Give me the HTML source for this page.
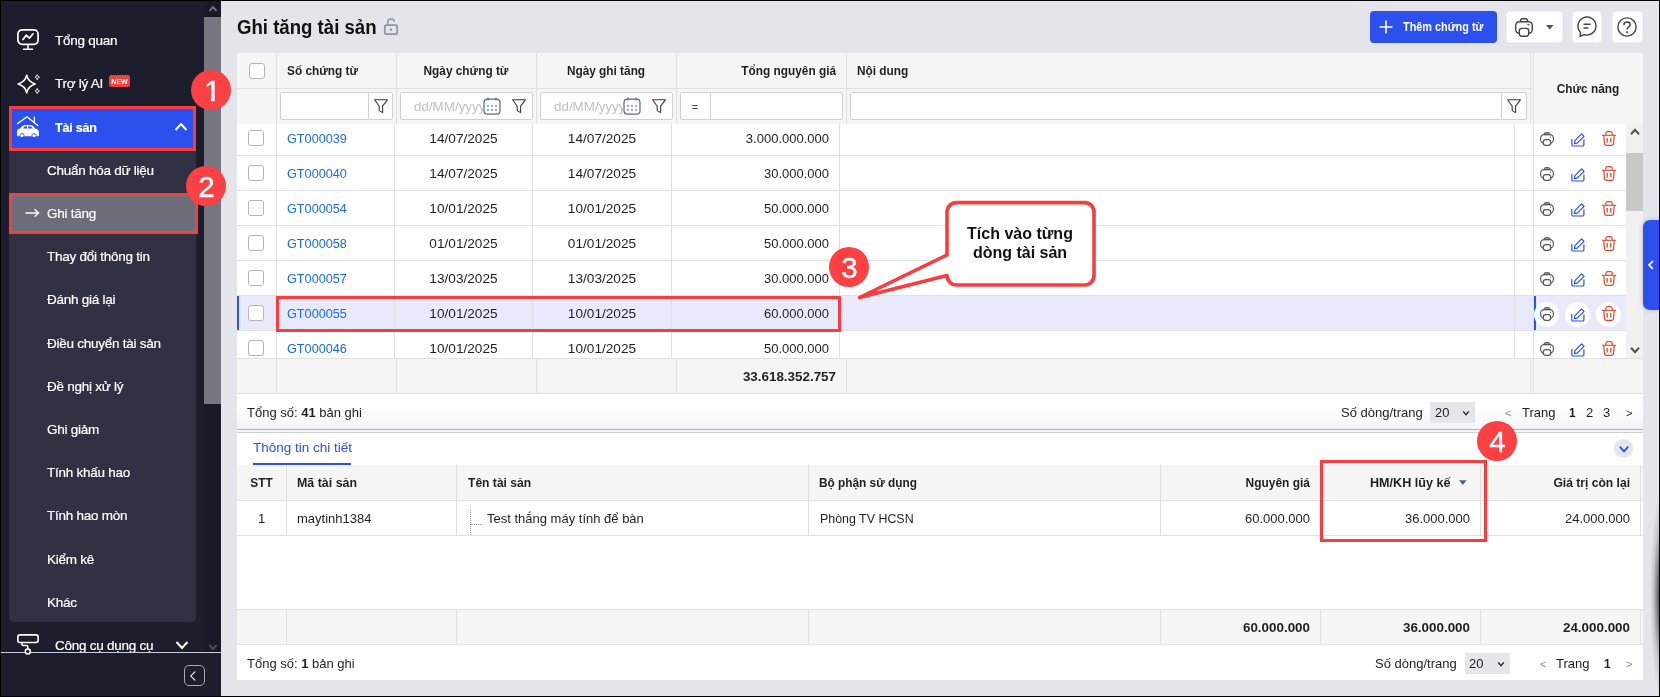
<!DOCTYPE html>
<html><head><meta charset="utf-8"><title>Ghi tăng tài sản</title>
<style>
*{box-sizing:border-box;margin:0;padding:0}
html,body{width:1660px;height:697px;overflow:hidden;background:#e4e5eb;font-family:"Liberation Sans",sans-serif;font-size:13px;color:#1f1f1f}
div,span{position:absolute}
span.i{position:static}
.t{white-space:nowrap;height:20px;line-height:20px}
.b{font-weight:bold}
.c{text-align:center}
.r{text-align:right}
#root{left:0;top:0;width:1660px;height:697px;will-change:transform}
#frame{left:0;top:0;width:1660px;height:697px;border:1px solid #000;z-index:100}
#side{left:0;top:0;width:221px;height:697px;background:#1c1d2d;color:#fff}
#sscroll{left:204px;top:0;width:17px;height:652px;background:#191a27}
#sscroll .thumb{left:0;top:17px;width:17px;height:387px;background:#75767f}
.mi{font-size:13.5px;letter-spacing:-0.25px;-webkit-text-stroke:0.2px #fff;color:#fff;white-space:nowrap;height:20px;line-height:20px}
#subpanel{left:9px;top:150px;width:187px;height:472px;background:#303244;border-radius:0 0 5px 5px}
.bg{background:#f5f5f5}
.w{background:#fff}
.vl{width:1px;background:#e0e0e0}
.hl{height:1px;background:#e0e0e0}
.inp{height:28px;top:92px;background:#fff;border:1px solid #d0d0d0;border-radius:2px}
.cb{width:16px;height:16px;border:1px solid #b5b5b5;border-radius:3px;background:#fff}
.lnk{color:#1a6de6}
.red{border:3px solid #fa3c3f}
.circ{width:40px;height:40px;border-radius:50%;background:#fb4143;color:#fff;font-size:30px;text-align:center;line-height:41.5px;-webkit-text-stroke:0.4px #fff}
.circ span{position:relative;display:inline-block;transform:scaleX(0.98)}
.circ span.one{left:1.2px;height:1.117em;line-height:1.117em;vertical-align:baseline;clip-path:polygon(0 0,100% 0,100% 72%,64% 72%,64% 100%,41.5% 100%,41.5% 72%,0 72%)}
.btn{background:#fff;border-radius:4px;top:11px;height:32px}
.ph{color:#c0c0c0}
svg{position:absolute;overflow:visible}
</style></head><body><div id="root">
<div id="side">
<div id="subpanel"></div>
<div class="" style="left:9px;top:106px;width:187px;height:44px;background:#2b50ed"></div>
<div class="" style="left:9px;top:193px;width:189px;height:41px;background:#6b6d78"></div>
<div class="mi" style="left:55px;top:31px;">Tổng quan</div>
<div class="mi" style="left:55px;top:74px;">Trợ lý AI</div>
<div class="mi" style="left:55px;top:118px;font-weight:bold;transform:scaleX(0.93);transform-origin:left center">Tài sản</div>
<div class="mi" style="left:47px;top:161px;">Chuẩn hóa dữ liệu</div>
<div class="mi" style="left:47px;top:204px;">Ghi tăng</div>
<div class="mi" style="left:47px;top:247px;">Thay đổi thông tin</div>
<div class="mi" style="left:47px;top:290px;">Đánh giá lại</div>
<div class="mi" style="left:47px;top:334px;">Điều chuyển tài sản</div>
<div class="mi" style="left:47px;top:377px;">Đề nghị xử lý</div>
<div class="mi" style="left:47px;top:420px;">Ghi giảm</div>
<div class="mi" style="left:47px;top:463px;">Tính khấu hao</div>
<div class="mi" style="left:47px;top:506px;">Tính hao mòn</div>
<div class="mi" style="left:47px;top:550px;">Kiểm kê</div>
<div class="mi" style="left:47px;top:593px;">Khác</div>
<div class="mi" style="left:55px;top:636px;">Công cụ dụng cụ</div>
<div style="left:109px;top:75px;width:21px;height:12px;background:#f0413f;border-radius:2.5px;color:#fff;font-size:7px;font-weight:bold;line-height:13.5px;text-align:center">NEW</div>
<svg style="left:17px;top:29px" width="22" height="22" viewBox="0 0 22 22" ><rect x="0.9" y="0.9" width="20.2" height="14.4" rx="4.2" fill="none" stroke="#fff" stroke-width="1.7"/><path d="M11 15.3 V20 M6 20.2 H16" stroke="#fff" stroke-width="1.6" fill="none"/><path d="M6 10.6 L9.2 6.2 L12.4 9.2 L16 4.8" stroke="#fff" stroke-width="1.7" fill="none" stroke-linejoin="round" stroke-linecap="round"/></svg>
<svg style="left:17px;top:74px" width="24" height="22" viewBox="0 0 24 22" ><path d="M9.7 1.2 Q11.2 8 18.2 10 Q11.2 12 9.7 18.8 Q8.2 12 1.2 10 Q8.2 8 9.7 1.2 Z" fill="none" stroke="#fff" stroke-width="1.6" stroke-linejoin="round"/><path d="M20.2 0.6 Q20.5 2.7 22.4 3.2 Q20.5 3.7 20.2 5.8 Q19.9 3.7 18 3.2 Q19.9 2.7 20.2 0.6 Z" fill="none" stroke="#fff" stroke-width="0.9"/><path d="M20.2 14.4 Q20.5 16.5 22.4 17 Q20.5 17.5 20.2 19.6 Q19.9 17.5 18 17 Q19.9 16.5 20.2 14.4 Z" fill="none" stroke="#fff" stroke-width="0.9"/></svg>
<svg style="left:16px;top:115px" width="24" height="24" viewBox="0 0 24 24" ><path d="M1.5 8.6 L11 1.8 L21.8 10.6" fill="none" stroke="#fff" stroke-width="1.3" stroke-linecap="round" stroke-linejoin="round"/><path d="M18.4 2 V7.4" stroke="#fff" stroke-width="1.3" stroke-linecap="round"/><path d="M1 17.2 Q1 14 4 13.6 Q6 10.2 9 10 H14 Q17.4 10.2 19 13.6 Q23 14 23 17.6 V20 Q23 21.2 21.8 21.2 H2.2 Q1 21.2 1 20 Z" fill="#fff"/><circle cx="6" cy="20.6" r="2.1" fill="#fff" stroke="#2b50ed" stroke-width="0.9"/><circle cx="18" cy="20.6" r="2.1" fill="#fff" stroke="#2b50ed" stroke-width="0.9"/><path d="M7 13.4 Q8 11.4 9.6 11.3 H11 V13.4 Z M12.2 11.3 H14 Q15.8 11.5 16.8 13.4 H12.2 Z" fill="#2b50ed"/></svg>
<svg style="left:25px;top:208px" width="15" height="10" viewBox="0 0 15 10" ><path d="M0.5 5 H13.5 M9.5 1.2 L13.6 5 L9.5 8.8" fill="none" stroke="#fff" stroke-width="1.3"/></svg>
<svg style="left:181px;top:127px" width="1" height="1"><path d="M-5.5 3.0 L0 -3.0 L5.5 3.0" fill="none" stroke="#fff" stroke-width="2" /></svg>
<svg style="left:181.5px;top:644.5px" width="1" height="1"><path d="M-5.5 -3.0 L0 3.0 L5.5 -3.0" fill="none" stroke="#fff" stroke-width="2" /></svg>
<svg style="left:17px;top:634px" width="22" height="22" viewBox="0 0 22 22" ><rect x="0.9" y="0.9" width="20.2" height="7.6" rx="2" fill="none" stroke="#fff" stroke-width="1.6"/><path d="M5 8.6 V10.4 Q5 11.6 6.2 11.6 H9.6 Q10.8 11.6 10.8 12.8 V15" fill="none" stroke="#fff" stroke-width="1.5"/></svg>
<div class="" style="left:0px;top:652px;width:221px;height:45px;background:#1c1d2d;z-index:2"></div>
<div class="" style="left:0px;top:652px;width:221px;height:1px;background:#c9cede;z-index:2"></div>
</div>
<div id="sscroll"><div class="thumb"></div></div>
<svg style="left:212.5px;top:9px" width="1" height="1"><path d="M-3.5 2.0 L0 -2.0 L3.5 2.0" fill="none" stroke="#7d7e88" stroke-width="1.8" /></svg>
<svg style="left:212.5px;top:647px" width="1" height="1"><path d="M-3.5 -2.0 L0 2.0 L3.5 -2.0" fill="none" stroke="#55565f" stroke-width="1.8" /></svg>
<div id="sbot" style="left:0;top:0;z-index:3">
<svg style="left:17px;top:634px" width="22" height="24" viewBox="0 0 22 24" ><circle cx="10.8" cy="17.6" r="2.5" fill="#1c1d2d" stroke="#fff" stroke-width="1.5"/></svg>
<div style="left:183.5px;top:664.5px;width:21.5px;height:21.5px;border:1.5px solid #a9aab4;border-radius:5px"></div>
<svg style="left:193px;top:675.5px" width="1" height="1"><path d="M-4.5 -2.3 L0 2.3 L4.5 -2.3" fill="none" stroke="#e0e0e6" stroke-width="1.1" transform="rotate(90)"/></svg>
</div>
<div class="t b" style="left:237px;top:13px;height:28px;line-height:28px;font-size:20px;color:#111;transform:scaleX(0.93);transform-origin:left center">Ghi tăng tài sản</div>
<div style="left:1370px;top:11px;width:127px;height:32px;background:#2b50ed;border-radius:4px"></div>
<div class="t b" style="left:1403px;top:17px;transform:scaleX(0.87);transform-origin:left center;color:#fff;font-size:12.5px">Thêm chứng từ</div>
<div class="btn" style="left:1506px;top:11px;width:56.5px;height:31.5px;border:1px solid #f0f1f6"></div>
<div class="btn" style="left:1571.7px;top:11px;width:30.5px;height:31.5px;border:1px solid #f0f1f6"></div>
<div class="btn" style="left:1612px;top:11px;width:30.5px;height:31.5px;border:1px solid #f0f1f6"></div>
<svg style="left:1379px;top:20px" width="14" height="14" viewBox="0 0 14 14" ><path d="M7 0.5 V13.5 M0.5 7 H13.5" stroke="#fff" stroke-width="1.6"/></svg>
<svg style="left:1515px;top:18px" width="18" height="19" viewBox="0 0 18 19" ><rect x="5.6" y="0.7" width="6.8" height="4" rx="1.8" fill="none" stroke="#444" stroke-width="1.4"/><rect x="0.7" y="3.8" width="16.6" height="11.4" rx="3.6" fill="#fff" stroke="#444" stroke-width="1.4"/><rect x="4.3" y="10.4" width="9.4" height="7.8" rx="2.4" fill="#fff" stroke="#444" stroke-width="1.4"/><path d="M12.4 6.8 H14.6" stroke="#444" stroke-width="1.2"/></svg>
<svg style="left:1546px;top:25px" width="8" height="5" viewBox="0 0 8 5" ><path d="M0 0 H7.6 L3.8 4.6 Z" fill="#4b5170"/></svg>
<svg style="left:1577px;top:16px" width="20" height="22" viewBox="0 0 20 22" ><path d="M3.6 16.4 A9 9 0 1 1 7.2 18.6 L3 20.4 Z" fill="none" stroke="#444" stroke-width="1.4" stroke-linejoin="round"/><path d="M6.6 8.2 H13.6 M6.6 12 H11.4" stroke="#444" stroke-width="1.4"/></svg>
<svg style="left:1617px;top:17px" width="20" height="20" viewBox="0 0 20 20" ><circle cx="10" cy="10" r="9.1" fill="none" stroke="#444" stroke-width="1.4"/><path d="M6.9 8 Q6.9 5 10 5 Q13.1 5 13.1 7.7 Q13.1 9.3 11.4 10.3 Q10.1 11.1 10.1 12.6" fill="none" stroke="#444" stroke-width="1.5"/><circle cx="10.1" cy="15.2" r="1" fill="#444"/></svg>
<svg style="left:384px;top:18px" width="14" height="17" viewBox="0 0 14 17" ><rect x="0.8" y="7.2" width="12.4" height="9" rx="2" fill="none" stroke="#8a92ac" stroke-width="1.7"/><path d="M3.6 7 V4.4 Q3.6 0.9 7 0.9 Q10.2 0.9 10.4 3.6" fill="none" stroke="#8a92ac" stroke-width="1.5"/><circle cx="7" cy="11.8" r="1.3" fill="#8a92ac"/></svg>
<div class="w" style="left:237px;top:53px;width:1406px;height:627px;"></div>
<div class="bg" style="left:237px;top:53px;width:1406px;height:71px;"></div>
<div class="t b" style="left:287px;top:61px;transform:scaleX(0.91);transform-origin:left center;">Số chứng từ</div>
<div class="t b c" style="left:396px;top:61px;width:140px;transform:scaleX(0.91);transform-origin:center center;">Ngày chứng từ</div>
<div class="t b c" style="left:536px;top:61px;width:140px;transform:scaleX(0.91);transform-origin:center center;">Ngày ghi tăng</div>
<div class="t b r" style="left:676px;top:61px;width:160px;transform:scaleX(0.91);transform-origin:right center;">Tổng nguyên giá</div>
<div class="t b" style="left:857px;top:61px;transform:scaleX(0.91);transform-origin:left center;">Nội dung</div>
<div class="t b c" style="left:1533px;top:79px;width:110px;transform:scaleX(0.91);transform-origin:center center;">Chức năng</div>
<div class="cb" style="left:249px;top:63px;width:16px;height:16px;"></div>
<div class="hl" style="left:237px;top:88px;width:1295px;height:1px;"></div>
<div class="vl" style="left:276px;top:53px;width:1px;height:71px;"></div>
<div class="vl" style="left:396px;top:53px;width:1px;height:71px;"></div>
<div class="vl" style="left:536px;top:53px;width:1px;height:71px;"></div>
<div class="vl" style="left:676px;top:53px;width:1px;height:71px;"></div>
<div class="vl" style="left:846px;top:53px;width:1px;height:71px;"></div>
<div class="vl" style="left:1530px;top:53px;width:1px;height:71px;"></div>
<div class="vl" style="left:1533px;top:53px;width:1px;height:71px;"></div>
<div class="inp" style="left:280px;top:92px;width:113px;height:28px;"></div>
<div class="vl" style="left:368px;top:92px;width:1px;height:28px;background:#d0d0d0"></div>
<div class="inp" style="left:400px;top:92px;width:133px;height:28px;"></div>
<div class="inp" style="left:540px;top:92px;width:133px;height:28px;"></div>
<div class="inp" style="left:680px;top:92px;width:163px;height:28px;"></div>
<div class="vl" style="left:710px;top:92px;width:1px;height:28px;background:#d0d0d0"></div>
<div class="inp" style="left:850px;top:92px;width:677px;height:28px;"></div>
<div class="vl" style="left:1501px;top:92px;width:1px;height:28px;background:#d0d0d0"></div>
<div class="t ph" style="left:414px;top:97px;transform:scaleX(1.03);transform-origin:left center;font-size:13px;width:74px;overflow:hidden">dd/MM/yyyy</div>
<div class="t ph" style="left:554px;top:97px;transform:scaleX(1.03);transform-origin:left center;font-size:13px;width:74px;overflow:hidden">dd/MM/yyyy</div>
<div class="t c" style="left:680px;top:97px;width:30px;font-size:11px;color:#444">=</div>
<svg style="left:374px;top:99px" width="14" height="14" viewBox="0 0 14 14" ><path d="M0.6 0.8 H13.4 L8.6 7.2 V13.6 L5.2 11.6 V7.2 Z" fill="none" stroke="#3a3a3a" stroke-width="1.1" stroke-linejoin="round"/></svg>
<svg style="left:512px;top:99px" width="14" height="14" viewBox="0 0 14 14" ><path d="M0.6 0.8 H13.4 L8.6 7.2 V13.6 L5.2 11.6 V7.2 Z" fill="none" stroke="#3a3a3a" stroke-width="1.1" stroke-linejoin="round"/></svg>
<svg style="left:652px;top:99px" width="14" height="14" viewBox="0 0 14 14" ><path d="M0.6 0.8 H13.4 L8.6 7.2 V13.6 L5.2 11.6 V7.2 Z" fill="none" stroke="#3a3a3a" stroke-width="1.1" stroke-linejoin="round"/></svg>
<svg style="left:1507px;top:99px" width="14" height="14" viewBox="0 0 14 14" ><path d="M0.6 0.8 H13.4 L8.6 7.2 V13.6 L5.2 11.6 V7.2 Z" fill="none" stroke="#3a3a3a" stroke-width="1.1" stroke-linejoin="round"/></svg>
<svg style="left:483px;top:97px" width="18" height="18" viewBox="0 0 18 18" ><rect x="0" y="0" width="18" height="18" fill="#fff"/><rect x="1" y="2.2" width="16" height="15" rx="3.5" fill="#fff" stroke="#5b6687" stroke-width="1.2"/><path d="M5 0.5 V3.5 M13 0.5 V3.5" stroke="#5b6687" stroke-width="1.2"/><rect x="4.2" y="8.2" width="1.6" height="1.4" fill="#5b6687"/><rect x="8.2" y="8.2" width="1.6" height="1.4" fill="#5b6687"/><rect x="12.2" y="8.2" width="1.6" height="1.4" fill="#5b6687"/><rect x="4.2" y="12.2" width="1.6" height="1.4" fill="#5b6687"/><rect x="8.2" y="12.2" width="1.6" height="1.4" fill="#5b6687"/><rect x="12.2" y="12.2" width="1.6" height="1.4" fill="#5b6687"/></svg>
<svg style="left:623px;top:97px" width="18" height="18" viewBox="0 0 18 18" ><rect x="0" y="0" width="18" height="18" fill="#fff"/><rect x="1" y="2.2" width="16" height="15" rx="3.5" fill="#fff" stroke="#5b6687" stroke-width="1.2"/><path d="M5 0.5 V3.5 M13 0.5 V3.5" stroke="#5b6687" stroke-width="1.2"/><rect x="4.2" y="8.2" width="1.6" height="1.4" fill="#5b6687"/><rect x="8.2" y="8.2" width="1.6" height="1.4" fill="#5b6687"/><rect x="12.2" y="8.2" width="1.6" height="1.4" fill="#5b6687"/><rect x="4.2" y="12.2" width="1.6" height="1.4" fill="#5b6687"/><rect x="8.2" y="12.2" width="1.6" height="1.4" fill="#5b6687"/><rect x="12.2" y="12.2" width="1.6" height="1.4" fill="#5b6687"/></svg>
<div class="" style="left:237px;top:296px;width:1389px;height:35px;background:#e8eafc"></div>
<div class="" style="left:237px;top:296px;width:2px;height:35px;background:#2b50ed"></div>
<div class="" style="left:1534px;top:296px;width:2px;height:35px;background:#2b50ed"></div>
<div class="cb" style="left:248px;top:130px;width:16px;height:16px;"></div>
<div class="t lnk" style="left:287px;top:129px;transform:scaleX(0.975);transform-origin:left center;">GT000039</div>
<div class="t c" style="left:394px;top:129px;width:139px;transform:scaleX(1.05);transform-origin:center center;">14/07/2025</div>
<div class="t c" style="left:532px;top:129px;width:140px;transform:scaleX(1.05);transform-origin:center center;">14/07/2025</div>
<div class="t r" style="left:672px;top:129px;width:157px;">3.000.000.000</div>
<div class="hl" style="left:237px;top:155px;width:1389px;height:1px;"></div>
<div class="cb" style="left:248px;top:165px;width:16px;height:16px;"></div>
<div class="t lnk" style="left:287px;top:164px;transform:scaleX(0.975);transform-origin:left center;">GT000040</div>
<div class="t c" style="left:394px;top:164px;width:139px;transform:scaleX(1.05);transform-origin:center center;">14/07/2025</div>
<div class="t c" style="left:532px;top:164px;width:140px;transform:scaleX(1.05);transform-origin:center center;">14/07/2025</div>
<div class="t r" style="left:672px;top:164px;width:157px;">30.000.000</div>
<div class="hl" style="left:237px;top:190px;width:1389px;height:1px;"></div>
<div class="cb" style="left:248px;top:200px;width:16px;height:16px;"></div>
<div class="t lnk" style="left:287px;top:199px;transform:scaleX(0.975);transform-origin:left center;">GT000054</div>
<div class="t c" style="left:394px;top:199px;width:139px;transform:scaleX(1.05);transform-origin:center center;">10/01/2025</div>
<div class="t c" style="left:532px;top:199px;width:140px;transform:scaleX(1.05);transform-origin:center center;">10/01/2025</div>
<div class="t r" style="left:672px;top:199px;width:157px;">50.000.000</div>
<div class="hl" style="left:237px;top:225px;width:1389px;height:1px;"></div>
<div class="cb" style="left:248px;top:235px;width:16px;height:16px;"></div>
<div class="t lnk" style="left:287px;top:234px;transform:scaleX(0.975);transform-origin:left center;">GT000058</div>
<div class="t c" style="left:394px;top:234px;width:139px;transform:scaleX(1.05);transform-origin:center center;">01/01/2025</div>
<div class="t c" style="left:532px;top:234px;width:140px;transform:scaleX(1.05);transform-origin:center center;">01/01/2025</div>
<div class="t r" style="left:672px;top:234px;width:157px;">50.000.000</div>
<div class="hl" style="left:237px;top:260px;width:1389px;height:1px;"></div>
<div class="cb" style="left:248px;top:270px;width:16px;height:16px;"></div>
<div class="t lnk" style="left:287px;top:269px;transform:scaleX(0.975);transform-origin:left center;">GT000057</div>
<div class="t c" style="left:394px;top:269px;width:139px;transform:scaleX(1.05);transform-origin:center center;">13/03/2025</div>
<div class="t c" style="left:532px;top:269px;width:140px;transform:scaleX(1.05);transform-origin:center center;">13/03/2025</div>
<div class="t r" style="left:672px;top:269px;width:157px;">30.000.000</div>
<div class="hl" style="left:237px;top:295px;width:1389px;height:1px;"></div>
<div class="cb" style="left:248px;top:305px;width:16px;height:16px;"></div>
<div class="t lnk" style="left:287px;top:304px;transform:scaleX(0.975);transform-origin:left center;">GT000055</div>
<div class="t c" style="left:394px;top:304px;width:139px;transform:scaleX(1.05);transform-origin:center center;">10/01/2025</div>
<div class="t c" style="left:532px;top:304px;width:140px;transform:scaleX(1.05);transform-origin:center center;">10/01/2025</div>
<div class="t r" style="left:672px;top:304px;width:157px;">60.000.000</div>
<div class="hl" style="left:237px;top:330px;width:1389px;height:1px;"></div>
<div class="cb" style="left:248px;top:340px;width:16px;height:16px;"></div>
<div class="t lnk" style="left:287px;top:339px;transform:scaleX(0.975);transform-origin:left center;">GT000046</div>
<div class="t c" style="left:394px;top:339px;width:139px;transform:scaleX(1.05);transform-origin:center center;">10/01/2025</div>
<div class="t c" style="left:532px;top:339px;width:140px;transform:scaleX(1.05);transform-origin:center center;">10/01/2025</div>
<div class="t r" style="left:672px;top:339px;width:157px;">50.000.000</div>
<div class="vl" style="left:276px;top:124px;width:1px;height:234px;"></div>
<div class="vl" style="left:394px;top:124px;width:1px;height:234px;"></div>
<div class="vl" style="left:532px;top:124px;width:1px;height:234px;"></div>
<div class="vl" style="left:671px;top:124px;width:1px;height:234px;"></div>
<div class="vl" style="left:839px;top:124px;width:1px;height:234px;"></div>
<div class="vl" style="left:1514px;top:124px;width:1px;height:234px;"></div>
<div class="vl" style="left:1533px;top:124px;width:1px;height:234px;"></div>
<div class="bg" style="left:237px;top:358px;width:1406px;height:36px;background:#f4f5f4"></div>
<div class="hl" style="left:237px;top:358px;width:1406px;height:1px;"></div>
<div class="hl" style="left:237px;top:393px;width:1406px;height:1px;"></div>
<div class="vl" style="left:276px;top:358px;width:1px;height:36px;"></div>
<div class="vl" style="left:396px;top:358px;width:1px;height:36px;"></div>
<div class="vl" style="left:536px;top:358px;width:1px;height:36px;"></div>
<div class="vl" style="left:676px;top:358px;width:1px;height:36px;"></div>
<div class="vl" style="left:846px;top:358px;width:1px;height:36px;"></div>
<div class="vl" style="left:1530px;top:358px;width:1px;height:36px;"></div>
<div class="vl" style="left:1533px;top:358px;width:1px;height:36px;"></div>
<div class="t b r" style="left:676px;top:367px;width:160px;transform:scaleX(1.03);transform-origin:right center;">33.618.352.757</div>
<div class="" style="left:1626px;top:124px;width:17px;height:234px;background:#f1f1f1"></div>
<div class="" style="left:1626px;top:153px;width:17px;height:58px;background:#c8c8c8"></div>
<svg style="left:1540px;top:132px" width="14" height="14" viewBox="0 0 14 14" ><path d="M4.2 2.6 V1.9 Q4.2 0.6 5.5 0.6 H8.5 Q9.8 0.6 9.8 1.9 V2.6 Z" fill="#9a9a9a" stroke="#555" stroke-width="1"/><rect x="0.6" y="2.6" width="12.8" height="8.6" rx="3.6" fill="none" stroke="#555" stroke-width="1.15"/><rect x="3.3" y="7.6" width="7.4" height="5.8" rx="2.4" fill="#fff" stroke="#555" stroke-width="1.15"/><path d="M10 5.2 H11" stroke="#555" stroke-width="1"/></svg>
<svg style="left:1570.5px;top:132.5px" width="14" height="14" viewBox="0 0 14 14" ><path d="M0.8 6.4 V11.7 Q0.8 13 2.1 13 H11.6 Q12.9 13 12.9 11.7 V6.8" fill="none" stroke="#2b50ed" stroke-width="1.2" stroke-linecap="round"/><path d="M10.6 0.9 L13 3.3 L6.2 10.1 L3.4 10.6 L3.9 7.7 Z" fill="none" stroke="#2b50ed" stroke-width="1.2" stroke-linejoin="round"/></svg>
<svg style="left:1602px;top:131.0px" width="14" height="15" viewBox="0 0 14 15" ><path d="M0 4.3 H14" stroke="#e0472c" stroke-width="1.1"/><path d="M3.8 4.2 V2.6 Q3.8 0.6 5.8 0.6 H8.2 Q10.2 0.6 10.2 2.6 V4.2" fill="none" stroke="#e0472c" stroke-width="1.1"/><path d="M1.8 4.4 L2.4 12.4 Q2.5 14.3 4.4 14.3 H9.6 Q11.5 14.3 11.6 12.4 L12.2 4.4" fill="none" stroke="#e0472c" stroke-width="1.2"/><path d="M5.2 7 V11.4 M8.8 7 V11.4" stroke="#e0472c" stroke-width="1.3"/></svg>
<svg style="left:1540px;top:167px" width="14" height="14" viewBox="0 0 14 14" ><path d="M4.2 2.6 V1.9 Q4.2 0.6 5.5 0.6 H8.5 Q9.8 0.6 9.8 1.9 V2.6 Z" fill="#9a9a9a" stroke="#555" stroke-width="1"/><rect x="0.6" y="2.6" width="12.8" height="8.6" rx="3.6" fill="none" stroke="#555" stroke-width="1.15"/><rect x="3.3" y="7.6" width="7.4" height="5.8" rx="2.4" fill="#fff" stroke="#555" stroke-width="1.15"/><path d="M10 5.2 H11" stroke="#555" stroke-width="1"/></svg>
<svg style="left:1570.5px;top:167.5px" width="14" height="14" viewBox="0 0 14 14" ><path d="M0.8 6.4 V11.7 Q0.8 13 2.1 13 H11.6 Q12.9 13 12.9 11.7 V6.8" fill="none" stroke="#2b50ed" stroke-width="1.2" stroke-linecap="round"/><path d="M10.6 0.9 L13 3.3 L6.2 10.1 L3.4 10.6 L3.9 7.7 Z" fill="none" stroke="#2b50ed" stroke-width="1.2" stroke-linejoin="round"/></svg>
<svg style="left:1602px;top:166.0px" width="14" height="15" viewBox="0 0 14 15" ><path d="M0 4.3 H14" stroke="#e0472c" stroke-width="1.1"/><path d="M3.8 4.2 V2.6 Q3.8 0.6 5.8 0.6 H8.2 Q10.2 0.6 10.2 2.6 V4.2" fill="none" stroke="#e0472c" stroke-width="1.1"/><path d="M1.8 4.4 L2.4 12.4 Q2.5 14.3 4.4 14.3 H9.6 Q11.5 14.3 11.6 12.4 L12.2 4.4" fill="none" stroke="#e0472c" stroke-width="1.2"/><path d="M5.2 7 V11.4 M8.8 7 V11.4" stroke="#e0472c" stroke-width="1.3"/></svg>
<svg style="left:1540px;top:202px" width="14" height="14" viewBox="0 0 14 14" ><path d="M4.2 2.6 V1.9 Q4.2 0.6 5.5 0.6 H8.5 Q9.8 0.6 9.8 1.9 V2.6 Z" fill="#9a9a9a" stroke="#555" stroke-width="1"/><rect x="0.6" y="2.6" width="12.8" height="8.6" rx="3.6" fill="none" stroke="#555" stroke-width="1.15"/><rect x="3.3" y="7.6" width="7.4" height="5.8" rx="2.4" fill="#fff" stroke="#555" stroke-width="1.15"/><path d="M10 5.2 H11" stroke="#555" stroke-width="1"/></svg>
<svg style="left:1570.5px;top:202.5px" width="14" height="14" viewBox="0 0 14 14" ><path d="M0.8 6.4 V11.7 Q0.8 13 2.1 13 H11.6 Q12.9 13 12.9 11.7 V6.8" fill="none" stroke="#2b50ed" stroke-width="1.2" stroke-linecap="round"/><path d="M10.6 0.9 L13 3.3 L6.2 10.1 L3.4 10.6 L3.9 7.7 Z" fill="none" stroke="#2b50ed" stroke-width="1.2" stroke-linejoin="round"/></svg>
<svg style="left:1602px;top:201.0px" width="14" height="15" viewBox="0 0 14 15" ><path d="M0 4.3 H14" stroke="#e0472c" stroke-width="1.1"/><path d="M3.8 4.2 V2.6 Q3.8 0.6 5.8 0.6 H8.2 Q10.2 0.6 10.2 2.6 V4.2" fill="none" stroke="#e0472c" stroke-width="1.1"/><path d="M1.8 4.4 L2.4 12.4 Q2.5 14.3 4.4 14.3 H9.6 Q11.5 14.3 11.6 12.4 L12.2 4.4" fill="none" stroke="#e0472c" stroke-width="1.2"/><path d="M5.2 7 V11.4 M8.8 7 V11.4" stroke="#e0472c" stroke-width="1.3"/></svg>
<svg style="left:1540px;top:237px" width="14" height="14" viewBox="0 0 14 14" ><path d="M4.2 2.6 V1.9 Q4.2 0.6 5.5 0.6 H8.5 Q9.8 0.6 9.8 1.9 V2.6 Z" fill="#9a9a9a" stroke="#555" stroke-width="1"/><rect x="0.6" y="2.6" width="12.8" height="8.6" rx="3.6" fill="none" stroke="#555" stroke-width="1.15"/><rect x="3.3" y="7.6" width="7.4" height="5.8" rx="2.4" fill="#fff" stroke="#555" stroke-width="1.15"/><path d="M10 5.2 H11" stroke="#555" stroke-width="1"/></svg>
<svg style="left:1570.5px;top:237.5px" width="14" height="14" viewBox="0 0 14 14" ><path d="M0.8 6.4 V11.7 Q0.8 13 2.1 13 H11.6 Q12.9 13 12.9 11.7 V6.8" fill="none" stroke="#2b50ed" stroke-width="1.2" stroke-linecap="round"/><path d="M10.6 0.9 L13 3.3 L6.2 10.1 L3.4 10.6 L3.9 7.7 Z" fill="none" stroke="#2b50ed" stroke-width="1.2" stroke-linejoin="round"/></svg>
<svg style="left:1602px;top:236.0px" width="14" height="15" viewBox="0 0 14 15" ><path d="M0 4.3 H14" stroke="#e0472c" stroke-width="1.1"/><path d="M3.8 4.2 V2.6 Q3.8 0.6 5.8 0.6 H8.2 Q10.2 0.6 10.2 2.6 V4.2" fill="none" stroke="#e0472c" stroke-width="1.1"/><path d="M1.8 4.4 L2.4 12.4 Q2.5 14.3 4.4 14.3 H9.6 Q11.5 14.3 11.6 12.4 L12.2 4.4" fill="none" stroke="#e0472c" stroke-width="1.2"/><path d="M5.2 7 V11.4 M8.8 7 V11.4" stroke="#e0472c" stroke-width="1.3"/></svg>
<svg style="left:1540px;top:272px" width="14" height="14" viewBox="0 0 14 14" ><path d="M4.2 2.6 V1.9 Q4.2 0.6 5.5 0.6 H8.5 Q9.8 0.6 9.8 1.9 V2.6 Z" fill="#9a9a9a" stroke="#555" stroke-width="1"/><rect x="0.6" y="2.6" width="12.8" height="8.6" rx="3.6" fill="none" stroke="#555" stroke-width="1.15"/><rect x="3.3" y="7.6" width="7.4" height="5.8" rx="2.4" fill="#fff" stroke="#555" stroke-width="1.15"/><path d="M10 5.2 H11" stroke="#555" stroke-width="1"/></svg>
<svg style="left:1570.5px;top:272.5px" width="14" height="14" viewBox="0 0 14 14" ><path d="M0.8 6.4 V11.7 Q0.8 13 2.1 13 H11.6 Q12.9 13 12.9 11.7 V6.8" fill="none" stroke="#2b50ed" stroke-width="1.2" stroke-linecap="round"/><path d="M10.6 0.9 L13 3.3 L6.2 10.1 L3.4 10.6 L3.9 7.7 Z" fill="none" stroke="#2b50ed" stroke-width="1.2" stroke-linejoin="round"/></svg>
<svg style="left:1602px;top:271.0px" width="14" height="15" viewBox="0 0 14 15" ><path d="M0 4.3 H14" stroke="#e0472c" stroke-width="1.1"/><path d="M3.8 4.2 V2.6 Q3.8 0.6 5.8 0.6 H8.2 Q10.2 0.6 10.2 2.6 V4.2" fill="none" stroke="#e0472c" stroke-width="1.1"/><path d="M1.8 4.4 L2.4 12.4 Q2.5 14.3 4.4 14.3 H9.6 Q11.5 14.3 11.6 12.4 L12.2 4.4" fill="none" stroke="#e0472c" stroke-width="1.2"/><path d="M5.2 7 V11.4 M8.8 7 V11.4" stroke="#e0472c" stroke-width="1.3"/></svg>
<div class="" style="left:1534.0px;top:301.5px;width:25px;height:25px;background:#fff;border-radius:50%"></div>
<div class="" style="left:1565.0px;top:301.5px;width:25px;height:25px;background:#fff;border-radius:50%"></div>
<div class="" style="left:1596.0px;top:301.5px;width:25px;height:25px;background:#fff;border-radius:50%"></div>
<svg style="left:1540px;top:307px" width="14" height="14" viewBox="0 0 14 14" ><path d="M4.2 2.6 V1.9 Q4.2 0.6 5.5 0.6 H8.5 Q9.8 0.6 9.8 1.9 V2.6 Z" fill="#9a9a9a" stroke="#555" stroke-width="1"/><rect x="0.6" y="2.6" width="12.8" height="8.6" rx="3.6" fill="none" stroke="#555" stroke-width="1.15"/><rect x="3.3" y="7.6" width="7.4" height="5.8" rx="2.4" fill="#fff" stroke="#555" stroke-width="1.15"/><path d="M10 5.2 H11" stroke="#555" stroke-width="1"/></svg>
<svg style="left:1570.5px;top:307.5px" width="14" height="14" viewBox="0 0 14 14" ><path d="M0.8 6.4 V11.7 Q0.8 13 2.1 13 H11.6 Q12.9 13 12.9 11.7 V6.8" fill="none" stroke="#2b50ed" stroke-width="1.2" stroke-linecap="round"/><path d="M10.6 0.9 L13 3.3 L6.2 10.1 L3.4 10.6 L3.9 7.7 Z" fill="none" stroke="#2b50ed" stroke-width="1.2" stroke-linejoin="round"/></svg>
<svg style="left:1602px;top:306.0px" width="14" height="15" viewBox="0 0 14 15" ><path d="M0 4.3 H14" stroke="#e0472c" stroke-width="1.1"/><path d="M3.8 4.2 V2.6 Q3.8 0.6 5.8 0.6 H8.2 Q10.2 0.6 10.2 2.6 V4.2" fill="none" stroke="#e0472c" stroke-width="1.1"/><path d="M1.8 4.4 L2.4 12.4 Q2.5 14.3 4.4 14.3 H9.6 Q11.5 14.3 11.6 12.4 L12.2 4.4" fill="none" stroke="#e0472c" stroke-width="1.2"/><path d="M5.2 7 V11.4 M8.8 7 V11.4" stroke="#e0472c" stroke-width="1.3"/></svg>
<svg style="left:1540px;top:342px" width="14" height="14" viewBox="0 0 14 14" ><path d="M4.2 2.6 V1.9 Q4.2 0.6 5.5 0.6 H8.5 Q9.8 0.6 9.8 1.9 V2.6 Z" fill="#9a9a9a" stroke="#555" stroke-width="1"/><rect x="0.6" y="2.6" width="12.8" height="8.6" rx="3.6" fill="none" stroke="#555" stroke-width="1.15"/><rect x="3.3" y="7.6" width="7.4" height="5.8" rx="2.4" fill="#fff" stroke="#555" stroke-width="1.15"/><path d="M10 5.2 H11" stroke="#555" stroke-width="1"/></svg>
<svg style="left:1570.5px;top:342.5px" width="14" height="14" viewBox="0 0 14 14" ><path d="M0.8 6.4 V11.7 Q0.8 13 2.1 13 H11.6 Q12.9 13 12.9 11.7 V6.8" fill="none" stroke="#2b50ed" stroke-width="1.2" stroke-linecap="round"/><path d="M10.6 0.9 L13 3.3 L6.2 10.1 L3.4 10.6 L3.9 7.7 Z" fill="none" stroke="#2b50ed" stroke-width="1.2" stroke-linejoin="round"/></svg>
<svg style="left:1602px;top:341.0px" width="14" height="15" viewBox="0 0 14 15" ><path d="M0 4.3 H14" stroke="#e0472c" stroke-width="1.1"/><path d="M3.8 4.2 V2.6 Q3.8 0.6 5.8 0.6 H8.2 Q10.2 0.6 10.2 2.6 V4.2" fill="none" stroke="#e0472c" stroke-width="1.1"/><path d="M1.8 4.4 L2.4 12.4 Q2.5 14.3 4.4 14.3 H9.6 Q11.5 14.3 11.6 12.4 L12.2 4.4" fill="none" stroke="#e0472c" stroke-width="1.2"/><path d="M5.2 7 V11.4 M8.8 7 V11.4" stroke="#e0472c" stroke-width="1.3"/></svg>
<svg style="left:1634.5px;top:132px" width="1" height="1"><path d="M-4.0 2.25 L0 -2.25 L4.0 2.25" fill="none" stroke="#505050" stroke-width="2" /></svg>
<svg style="left:1634.5px;top:350px" width="1" height="1"><path d="M-4.0 -2.25 L0 2.25 L4.0 -2.25" fill="none" stroke="#505050" stroke-width="2" /></svg>
<div class="" style="left:237px;top:394px;width:1406px;height:35px;background:linear-gradient(#fff 0%,#fff 35%,#f3f4f9 100%)"></div>
<div class="t " style="left:247px;top:403px;">Tổng số: <span class="i b">41</span> bản ghi</div>
<div class="t " style="left:1341px;top:403px;">Số dòng/trang</div>
<div class="" style="left:1430px;top:402px;width:45px;height:21px;background:#e5e6ea"></div>
<svg style="left:1466px;top:413.2px" width="1" height="1"><path d="M-2.8 -1.6 L0 1.6 L2.8 -1.6" fill="none" stroke="#222" stroke-width="1.4" /></svg>
<div class="t " style="left:1435px;top:403px;">20</div>
<div class="t " style="left:1505px;top:403px;color:#888;font-size:11px">&lt;</div>
<div class="t " style="left:1522px;top:403px;">Trang</div>
<div class="t b" style="left:1569px;top:403px;transform:scaleX(0.91);transform-origin:left center;">1</div>
<div class="t " style="left:1586px;top:403px;">2</div>
<div class="t " style="left:1603px;top:403px;">3</div>
<div class="t " style="left:1626px;top:403px;font-size:11px">&gt;</div>
<div class="" style="left:237px;top:429px;width:1406px;height:1px;background:#b4b4b4"></div>
<div class="" style="left:237px;top:432px;width:1406px;height:1px;background:#cfcfcf"></div>
<div class="" style="left:237px;top:430px;width:1406px;height:2px;background:#f4f5f8"></div>
<div class="t " style="left:253px;top:438px;color:#2b50ed;font-size:13.5px">Thông tin chi tiết</div>
<div class="" style="left:253px;top:463px;width:98px;height:2px;background:#2b50ed"></div>
<div class="" style="left:1614px;top:439px;width:19px;height:19px;background:#e4e6ee;border-radius:50%"></div>
<svg style="left:1623.5px;top:449.3px" width="1" height="1"><path d="M-4.2 -2.3 L0 2.3 L4.2 -2.3" fill="none" stroke="#2b50ed" stroke-width="1.8" /></svg>
<div class="bg" style="left:237px;top:465px;width:1406px;height:35px;"></div>
<div class="vl" style="left:286px;top:465px;width:1px;height:70px;"></div>
<div class="vl" style="left:456px;top:465px;width:1px;height:70px;"></div>
<div class="vl" style="left:808px;top:465px;width:1px;height:70px;"></div>
<div class="vl" style="left:1160px;top:465px;width:1px;height:70px;"></div>
<div class="vl" style="left:1320px;top:465px;width:1px;height:70px;"></div>
<div class="vl" style="left:1480px;top:465px;width:1px;height:70px;"></div>
<div class="vl" style="left:1640px;top:465px;width:1px;height:70px;"></div>
<div class="hl" style="left:237px;top:500px;width:1406px;height:1px;"></div>
<div class="hl" style="left:237px;top:535px;width:1406px;height:1px;"></div>
<div class="t b c" style="left:237px;top:473px;width:49px;transform:scaleX(0.91);transform-origin:center center;">STT</div>
<div class="t b" style="left:297px;top:473px;transform:scaleX(0.955);transform-origin:left center;">Mã tài sản</div>
<div class="t b" style="left:467.5px;top:473px;transform:scaleX(0.93);transform-origin:left center;">Tên tài sản</div>
<div class="t b" style="left:819px;top:473px;transform:scaleX(0.91);transform-origin:left center;">Bộ phận sử dụng</div>
<div class="t b r" style="left:1160px;top:473px;width:150px;transform:scaleX(0.92);transform-origin:right center;">Nguyên giá</div>
<div class="t b r" style="left:1320px;top:473px;width:130.5px;transform:scaleX(0.97);transform-origin:right center;">HM/KH lũy kế</div>
<svg style="left:1459px;top:480px" width="8" height="6" viewBox="0 0 8 6" ><path d="M0 0.2 H7.6 L3.8 5 Z" fill="#5a5f7d"/></svg>
<div class="t b r" style="left:1480px;top:473px;width:150px;transform:scaleX(0.93);transform-origin:right center;">Giá trị còn lại</div>
<div class="t c" style="left:237px;top:509px;width:49px;">1</div>
<div class="t " style="left:297px;top:509px;">maytinh1384</div>
<div class="t " style="left:487px;top:509px;">Test thắng máy tính để bàn</div>
<div class="" style="left:470px;top:510px;width:1px;height:25px;background:none;border-left:1px dotted #999"></div>
<div class="" style="left:471px;top:524px;width:10px;height:1px;background:none;border-top:1px dotted #999"></div>
<div class="t " style="left:819.5px;top:509px;transform:scaleX(0.955);transform-origin:left center;">Phòng TV HCSN</div>
<div class="t r" style="left:1160px;top:509px;width:150px;">60.000.000</div>
<div class="t r" style="left:1320px;top:509px;width:150px;">36.000.000</div>
<div class="t r" style="left:1480px;top:509px;width:150px;">24.000.000</div>
<div class="bg" style="left:237px;top:609px;width:1406px;height:35px;"></div>
<div class="hl" style="left:237px;top:609px;width:1406px;height:1px;"></div>
<div class="hl" style="left:237px;top:644px;width:1406px;height:1px;"></div>
<div class="vl" style="left:286px;top:609px;width:1px;height:35px;"></div>
<div class="vl" style="left:456px;top:609px;width:1px;height:35px;"></div>
<div class="vl" style="left:808px;top:609px;width:1px;height:35px;"></div>
<div class="vl" style="left:1160px;top:609px;width:1px;height:35px;"></div>
<div class="vl" style="left:1320px;top:609px;width:1px;height:35px;"></div>
<div class="vl" style="left:1480px;top:609px;width:1px;height:35px;"></div>
<div class="vl" style="left:1640px;top:609px;width:1px;height:35px;"></div>
<div class="t b r" style="left:1160px;top:618px;width:150px;transform:scaleX(1.03);transform-origin:right center;">60.000.000</div>
<div class="t b r" style="left:1320px;top:618px;width:150px;transform:scaleX(1.03);transform-origin:right center;">36.000.000</div>
<div class="t b r" style="left:1480px;top:618px;width:150px;transform:scaleX(1.03);transform-origin:right center;">24.000.000</div>
<div class="t " style="left:247px;top:654px;">Tổng số: <span class="i b">1</span> bản ghi</div>
<div class="t " style="left:1375px;top:654px;">Số dòng/trang</div>
<div class="" style="left:1465px;top:653px;width:45px;height:21px;background:#e5e6ea"></div>
<svg style="left:1501px;top:664.2px" width="1" height="1"><path d="M-2.8 -1.6 L0 1.6 L2.8 -1.6" fill="none" stroke="#222" stroke-width="1.4" /></svg>
<div class="t " style="left:1469px;top:654px;">20</div>
<div class="t " style="left:1540px;top:654px;color:#888;font-size:11px">&lt;</div>
<div class="t " style="left:1556px;top:654px;">Trang</div>
<div class="t b" style="left:1604px;top:654px;transform:scaleX(0.91);transform-origin:left center;">1</div>
<div class="t " style="left:1626px;top:654px;color:#888;font-size:11px">&gt;</div>
<div class="" style="left:1643px;top:219.5px;width:17px;height:90px;background:#2b50ed;border-radius:7px 0 0 7px;box-shadow:-1px 0 4px rgba(0,0,0,0.18)"></div>
<svg style="left:1650.6px;top:264.7px" width="1" height="1"><path d="M-4.0 -1.9 L0 1.9 L4.0 -1.9" fill="none" stroke="#fff" stroke-width="1.8" transform="rotate(90)"/></svg>
<div class="red" style="left:9px;top:106px;width:187px;height:45px;"></div>
<div class="red" style="left:9px;top:193px;width:189px;height:41px;"></div>
<div class="red" style="left:276px;top:296px;width:565px;height:36px;"></div>
<div class="red" style="left:1320px;top:460px;width:167px;height:82px;"></div>
<div class="circ" style="left:191px;top:70px"><span class="one">1</span></div>
<div class="circ" style="left:186px;top:166px"><span>2</span></div>
<div class="circ" style="left:829px;top:247px"><span>3</span></div>
<div class="circ" style="left:1477px;top:421px"><span>4</span></div>
<svg style="left:0;top:0" width="1660" height="697"><path d="M956.5 202.6 H1084.5 a9.5 9.5 0 0 1 9.5 9.5 V275.5 a9.5 9.5 0 0 1 -9.5 9.5 H956.5 a9.5 9.5 0 0 1 -9.5 -9.5 L859.5 297.5 L947 255 V212.1 a9.5 9.5 0 0 1 9.5 -9.5 Z" fill="#fff" stroke="#fa3c3f" stroke-width="3.6" stroke-linejoin="round"/></svg>
<div class="b c" style="left:946px;top:224px;width:148px;font-size:16px;line-height:19.4px;color:#111">Tích vào từng<br>dòng tài sản</div>
<div style="left:1640px;top:480px;width:20px;height:215px;background:radial-gradient(ellipse 11px 100px at 21px 115px, rgba(0,0,0,0.75), rgba(0,0,0,0.45) 35%, rgba(0,0,0,0.12) 70%, rgba(0,0,0,0) 100%)"></div>
<div id="frame"></div>
</div></body></html>
